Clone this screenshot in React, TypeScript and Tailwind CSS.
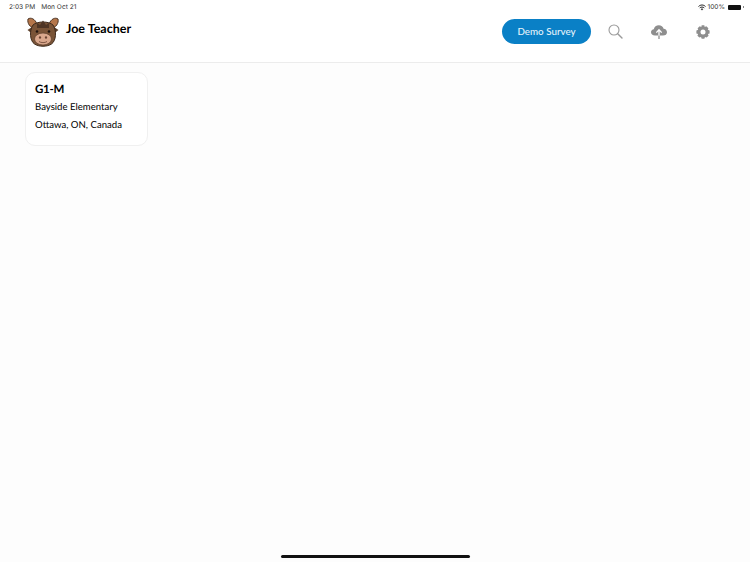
import React from "react";

function Moose() {
  return (
    <svg width="32" height="30" viewBox="0 0 32 30">
      <path d="M8 11 C3 11 0 6 1 2 C4 0 8 2 10 7 Z" fill="#b5764a" stroke="#4a3222" strokeWidth="1" />
      <path d="M24 11 C29 11 32 6 31 2 C28 0 24 2 22 7 Z" fill="#b5764a" stroke="#4a3222" strokeWidth="1" />
      <path d="M5 10 L0.5 13 L5 16.5 Z" fill="#5e412c" />
      <path d="M27 10 L31.5 13 L27 16.5 Z" fill="#5e412c" />
      <path d="M6 8 C10 4 22 4 26 8 C30 14 29 24 24.5 27 C20 30 12 30 7.5 27 C3 24 2 14 6 8 Z" fill="#7a5437" stroke="#3f2b1d" strokeWidth="1" />
      <path d="M10 6 L13 8 L16 3.5 L19 8 L22 6 L22 11 L10 11 Z" fill="#4f3525" />
      <circle cx="10" cy="14.5" r="1.3" fill="#20140e" />
      <circle cx="22" cy="14.5" r="1.3" fill="#20140e" />
      <ellipse cx="16" cy="22" rx="8.5" ry="6" fill="#d9a78c" stroke="#5a3d2b" strokeWidth="0.7" />
      <ellipse cx="13" cy="20.5" rx="1.1" ry="1.3" fill="#6a4432" />
      <ellipse cx="19" cy="20.5" rx="1.1" ry="1.3" fill="#6a4432" />
      <path d="M12 24.5 C14 26 18 26 20 24.5" stroke="#6a4432" strokeWidth="0.8" fill="none" />
    </svg>
  );
}

export default function App() {
  return (
    <div className="relative flex h-[562px] w-[750px] flex-col overflow-hidden bg-[#fdfdfd] font-['Lato','Noto_Sans',sans-serif] text-black [text-rendering:geometricPrecision]">
      <header className="h-[63px] shrink-0 border-b border-[#ececec] bg-white">
        <div className="flex h-[13px] items-center justify-between pl-[9px] pr-[6px] pt-[2px] font-['Inter',sans-serif] text-[6.6px] text-[#333]">
          <div className="flex gap-[6px]">
            <span>2:03 PM</span>
            <span>Mon Oct 21</span>
          </div>
          <div className="flex items-center gap-[2px]">
            <svg width="8" height="7" viewBox="0 0 16 12" fill="none" stroke="#222" strokeWidth="2">
              <path d="M1 4 C5 0 11 0 15 4 M3.5 6.8 C6 4.5 10 4.5 12.5 6.8" />
              <path d="M5.8 9 C7 8 9 8 10.2 9 L8 11.5 Z" fill="#222" strokeWidth="0.5" />
            </svg>
            <span>100%</span>
            <span className="ml-[1px] h-[5px] w-[13px] rounded-[1px] bg-[#111]" />
            <span className="h-[2px] w-[1px] bg-[#888]" />
          </div>
        </div>
        <div className="flex items-start justify-between pl-[27px] pr-[39px]">
          <div className="flex items-start gap-[7px] pt-[4px]">
            <Moose />
            <span className="pt-[3px] text-[12.5px] font-bold leading-[18px]">Joe Teacher</span>
          </div>
          <div className="flex items-center pt-[6px]">
            <button className="flex h-[25px] w-[89px] items-center justify-center rounded-full bg-[#0a80c6] text-[9.8px] font-medium text-[#e6f3fb]">
              Demo Survey
            </button>
            <div className="ml-[16px] flex w-[16px] justify-center">
              <svg width="15" height="15" viewBox="0 0 15 15" fill="none" stroke="#9a9a9a" strokeWidth="1.1" strokeLinecap="round">
                <circle cx="6" cy="6" r="5" />
                <path d="M9.7 9.7 L14 14" strokeWidth="1.4" />
              </svg>
            </div>
            <div className="ml-[28px] flex w-[16px] justify-center">
              <svg width="16" height="14" viewBox="0 0 16 14">
                <path d="M4 10.5 C1.5 10.5 0 9 0 7.2 C0 5.5 1.3 4.3 2.8 4.2 C3.3 1.8 5.3 0.3 7.8 0.3 C10.2 0.3 12 1.8 12.6 3.8 C14.6 4 16 5.4 16 7.2 C16 9.2 14.5 10.5 12 10.5 Z" fill="#8e8e8e" />
                <path d="M8 13.5 V5 M5.3 7.6 L8 4.8 L10.7 7.6" stroke="#fff" strokeWidth="1.3" fill="none" />
                <path d="M8 10.5 V14" stroke="#8e8e8e" strokeWidth="1.3" />
              </svg>
            </div>
            <div className="ml-[28px] flex w-[16px] justify-center">
              <svg width="14" height="14" viewBox="0 0 14 14">
                <path d="M5.7 0.3 H8.3 L8.7 2 L10.3 1.3 L12.4 3.2 L11.8 4.8 L13.6 5.4 V8.4 L11.9 9 L12.6 10.7 L10.6 12.6 L9 11.9 L8.3 13.7 H5.7 L5 11.9 L3.4 12.6 L1.4 10.7 L2.1 9 L0.4 8.4 V5.4 L2.2 4.8 L1.6 3.2 L3.7 1.3 L5.3 2 Z" fill="#8e8e8e" />
                <circle cx="7" cy="7" r="2.5" fill="#fff" />
              </svg>
            </div>
          </div>
        </div>
      </header>
      <main className="pl-[25px] pt-[9px]">
        <div className="h-[74px] w-[123px] rounded-[10px] border border-[#f0f0f0] bg-white pl-[9px] pt-[8px]">
          <div className="text-[11.5px] font-bold leading-[17px] tracking-[-0.3px]">G1-M</div>
          <div className="mt-[1px] text-[9.6px] leading-[18px]">Bayside Elementary</div>
          <div className="text-[9.6px] leading-[17px]">Ottawa, ON, Canada</div>
        </div>
      </main>
      <div className="absolute bottom-[4px] left-[281px] h-[3px] w-[189px] rounded-full bg-[#111]" />
    </div>
  );
}
